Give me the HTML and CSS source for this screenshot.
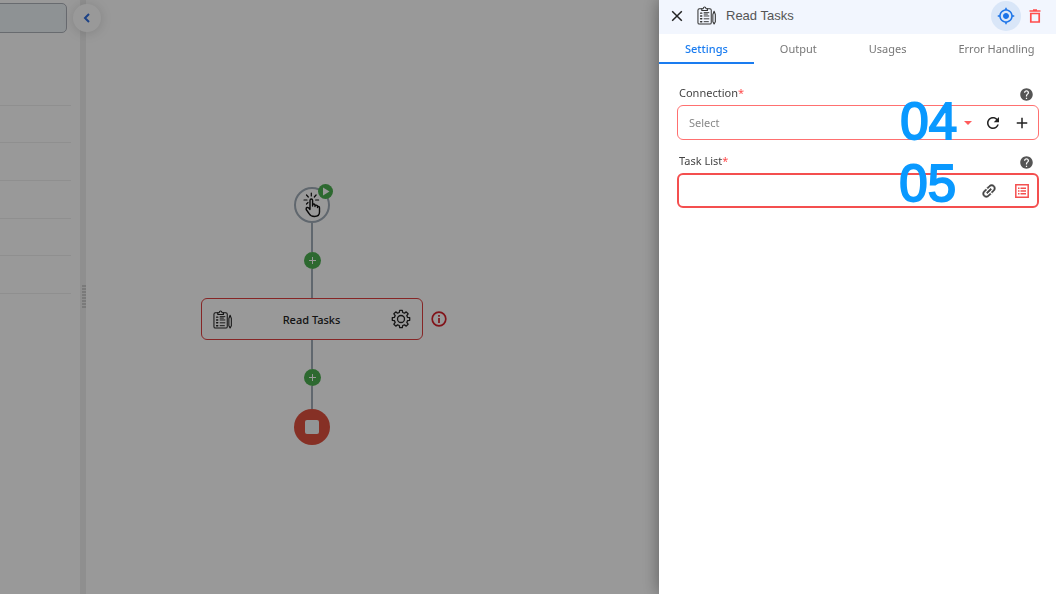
FILE: index.html
```html
<!DOCTYPE html>
<html lang="en">
<head>
    <meta charset="UTF-8">
    <meta name="viewport" content="width=device-width, initial-scale=1.0">
    <title>Read Tasks</title>
    <link rel="stylesheet" href="styles.css">
</head>
<body>

<!-- shared icons -->
<svg class="sprite" aria-hidden="true">
    <symbol id="tasks" viewBox="0 0 20 20">
        <g fill="none" stroke="currentColor" stroke-width="1.1" stroke-linejoin="round" stroke-linecap="round">
            <path d="M5 3H2.5Q1 3 1 4.500V17.500Q1 19 2.500 19H13.500Q15 19 15 17.500V4.500Q15 3 13.500 3H11"/>
            <path d="M5 4.800V2.800H6.500Q6.800 1 8 1T9.500 2.800H11V4.800Z"/>
            <path d="M3.800 7.500H5M3.800 10.500H5M3.800 13.500H5M3.800 16.500H5" stroke-width="1.500"/>
            <path d="M7.500 7H12.500M7.500 8.500H11M7.500 10.500H12.500M7.500 13.500H12.500M7.500 16.500H12" stroke-width="1"/>
            <path d="M16.700 9L18 5.500L19.300 9V16.500L18 19L16.700 16.500Z"/>
        </g>
    </symbol>
    <symbol id="help" viewBox="0 0 24 24">
        <path fill="currentColor" d="M12 2C6.480 2 2 6.480 2 12s4.480 10 10 10 10-4.480 10-10S17.520 2 12 2zm1 17h-2v-2h2v2zm2.070-7.750l-.9.920C13.450 12.900 13 13.500 13 15h-2v-.5c0-1.100.450-2.100 1.170-2.830l1.240-1.260c.370-.360.590-.860.590-1.410 0-1.100-.9-2-2-2s-2 .9-2 2H8c0-2.210 1.790-4 4-4s4 1.790 4 4c0 .880-.360 1.680-.930 2.250z"/>
    </symbol>
</svg>

<div class="app">
    <aside class="sidebar">
        <input class="search" type="text" aria-label="Search">
        <ul class="steps">
            <li></li>
            <li></li>
            <li></li>
            <li></li>
            <li></li>
            <li></li>
        </ul>
    </aside>
    <div class="divider">
        <button class="collapse" type="button" aria-label="Collapse">
            <svg width="8" height="10" viewBox="0 0 8 10"><path d="M6 1L2 5L6 9" fill="none" stroke="currentColor" stroke-width="2"/></svg>
        </button>
        <span class="grip"></span>
    </div>
    <main class="canvas">
        <div class="flow">
            <div class="node trigger">
                <svg width="24" height="26" viewBox="0 0 24 26" fill="none" stroke="currentColor" stroke-width="1.400" stroke-linecap="round" stroke-linejoin="round">
                    <path d="M10 17V8.500Q10 7 11.300 7T12.600 8.500V14M12.600 13Q13 11.700 14 12T15 13.500V14.500M15 13.700Q16 12.500 17.500 14V15.500M17.500 14.700Q19.500 14 19.500 16V20Q19.500 24.500 14.500 24.500Q10.500 24.500 9 21.500L6.200 17.500Q5.800 16 7 15.500T10 17.500"/>
                    <path d="M11.300 1V4M6.500 3L8.300 5M16.100 3L14.300 5M4 8H7M15.600 8H18.600M6.500 12L8 10.500" stroke-width="1.200"/>
                </svg>
                <button class="play" type="button" aria-label="Run">
                    <svg width="15" height="15" viewBox="0 0 15 15"><path d="M5 3.500V11.500L11.500 7.500Z" fill="currentColor"/></svg>
                </button>
            </div>
            <span class="line"></span>
            <button class="add" type="button" aria-label="Add step"><svg width="9" height="9" viewBox="0 0 9 9"><path d="M4.500 1V8M1 4.500H8" stroke="currentColor"/></svg></button>
            <span class="line"></span>
            <div class="card">
                <svg class="card-icon" width="19" height="19"><use href="#tasks"/></svg>
                <span class="card-name">Read Tasks</span>
                <button class="gear" type="button" aria-label="Step settings">
                    <svg width="20" height="20" viewBox="0 0 20 20" fill="none" stroke="currentColor" stroke-width="1.300" stroke-linejoin="round">
                        <path d="M8.300 3.500L8.700 1.300H11.300L11.700 3.500L13.400 4.200L15.200 2.900L17.100 4.800L15.800 6.600L16.500 8.300L18.700 8.700V11.300L16.500 11.700L15.800 13.400L17.100 15.200L15.200 17.100L13.400 15.800L11.700 16.500L11.300 18.700H8.700L8.300 16.500L6.600 15.800L4.800 17.100L2.900 15.200L4.200 13.400L3.500 11.700L1.300 11.300V8.700L3.500 8.300L4.200 6.600L2.900 4.800L4.800 2.900L6.600 4.200Z"/>
                        <circle cx="10" cy="10" r="3.500"/>
                    </svg>
                </button>
                <svg class="info" width="16" height="16" viewBox="0 0 16 16" fill="none" stroke="currentColor" stroke-width="1.700">
                    <circle cx="8" cy="8" r="6.800"/>
                    <path d="M8 7V12M8 4V5.700"/>
                </svg>
            </div>
            <span class="line"></span>
            <button class="add" type="button" aria-label="Add step"><svg width="9" height="9" viewBox="0 0 9 9"><path d="M4.500 1V8M1 4.500H8" stroke="currentColor"/></svg></button>
            <span class="line short"></span>
            <div class="node stop"><span></span></div>
        </div>
    </main>
</div>

<div class="overlay"></div>

<section class="drawer">
    <header class="drawer-header">
        <button class="icon-btn" type="button" aria-label="Close">
            <svg width="12" height="12" viewBox="0 0 12 12"><path d="M1.200 1.200L10.800 10.800M10.800 1.200L1.200 10.800" stroke="#222" stroke-width="1.500"/></svg>
        </button>
        <svg class="drawer-icon" width="19" height="19"><use href="#tasks"/></svg>
        <h1>Read Tasks</h1>
        <button class="locate" type="button" aria-label="Locate step">
            <svg width="18" height="18" viewBox="0 0 24 24"><path fill="currentColor" d="M12 8c-2.210 0-4 1.790-4 4s1.790 4 4 4 4-1.790 4-4-1.790-4-4-4zm8.940 3c-.460-4.170-3.770-7.480-7.940-7.940V1h-2v2.060C6.830 3.520 3.520 6.830 3.060 11H1v2h2.060c.460 4.170 3.770 7.480 7.940 7.940V23h2v-2.060c4.170-.460 7.480-3.770 7.940-7.940H23v-2h-2.060zM12 19c-3.870 0-7-3.130-7-7s3.130-7 7-7 7 3.130 7 7-3.130 7-7 7z"/></svg>
        </button>
        <button class="icon-btn delete" type="button" aria-label="Delete">
            <svg width="12" height="14" viewBox="0 0 12 14" fill="none" stroke="currentColor" stroke-width="1.700"><path d="M0.500 2H11.500M4 1H8M1.800 4.500V13H10.200V4.500Z"/></svg>
        </button>
    </header>
    <nav class="tabs">
        <a class="active" href="#settings">Settings</a>
        <a href="#output">Output</a>
        <a href="#usages">Usages</a>
        <a href="#errors">Error Handling</a>
    </nav>
    <form class="settings" id="settings">
        <div class="form-group">
            <div class="label-row">
                <label for="connection">Connection<span>*</span></label>
                <svg width="15" height="15"><use href="#help"/></svg>
            </div>
            <div class="field">
                <select id="connection">
                    <option>Select</option>
                </select>
                <svg class="caret" width="8" height="4" viewBox="0 0 8 4"><path d="M0 0H8L4 4Z" fill="currentColor"/></svg>
                <button type="button" aria-label="Refresh">
                    <svg width="18" height="18" viewBox="0 0 24 24"><path fill="currentColor" d="M17.650 6.350C16.200 4.900 14.210 4 12 4c-4.420 0-7.990 3.580-7.990 8s3.570 8 7.990 8c3.730 0 6.840-2.550 7.730-6h-2.080c-.820 2.330-3.040 4-5.650 4-3.310 0-6-2.690-6-6s2.690-6 6-6c1.660 0 3.140.690 4.220 1.780L13 11h7V4l-2.350 2.350z"/></svg>
                </button>
                <button type="button" aria-label="Add connection">
                    <svg width="18" height="18" viewBox="0 0 24 24"><path fill="currentColor" d="M19 13h-6v6h-2v-6H5v-2h6V5h2v6h6v2z"/></svg>
                </button>
                <span class="mark">04</span>
            </div>
        </div>
        <div class="form-group">
            <div class="label-row">
                <label for="taskList">Task List<span>*</span></label>
                <svg width="15" height="15"><use href="#help"/></svg>
            </div>
            <div class="field focused">
                <input type="text" id="taskList">
                <button class="link" type="button" aria-label="Link value">
                    <svg width="18" height="18" viewBox="0 0 24 24"><path transform="rotate(-45 12 12)" fill="currentColor" stroke="currentColor" stroke-width=".6" d="M3.900 12c0-1.710 1.390-3.100 3.100-3.100h4V7H7c-2.760 0-5 2.240-5 5s2.240 5 5 5h4v-1.900H7c-1.710 0-3.100-1.390-3.100-3.100zM8 13h8v-2H8v2zm9-6h-4v1.900h4c1.710 0 3.100 1.390 3.100 3.100s-1.390 3.100-3.100 3.100h-4V17h4c2.760 0 5-2.240 5-5s-2.240-5-5-5z"/></svg>
                </button>
                <button class="list" type="button" aria-label="Choose from list">
                    <svg width="18" height="18" viewBox="0 0 18 18" fill="none" stroke="currentColor" stroke-width="1.500"><path d="M2.800 2.800H15.200V15.200H2.800ZM5 6.200H6.500M7.500 6.200H13M5 9H6.500M7.500 9H13M5 11.800H6.500M7.500 11.800H13"/></svg>
                </button>
                <span class="mark">05</span>
            </div>
        </div>
    </form>
</section>

</body>
</html>
```

FILE: styles.css
```css
* {
    box-sizing: border-box;
}
body {
    margin: 0;
    font-family: "Noto Sans", sans-serif;
    font-size: 11px;
    background: #fff;
    overflow: hidden;
}
button {
    display: flex;
    align-items: center;
    justify-content: center;
    padding: 0;
    border: none;
    background: none;
    color: #222;
    cursor: pointer;
}
svg {
    display: block;
    flex: none;
}
.sprite {
    position: absolute;
    width: 0;
    height: 0;
}
.app {
    display: flex;
    height: 100vh;
}

/* left column */
.sidebar {
    width: 80px;
    padding-top: 3px;
    overflow: hidden;
}
.search {
    display: block;
    width: 80px;
    height: 30px;
    margin-left: -13px;
    border: 1px solid #aeb2ba;
    border-radius: 5px;
    background: #edf3f7;
}
.steps {
    display: grid;
    grid-auto-rows: 1fr;
    height: 226px;
    margin: 35px 9px 0 0;
    padding: 0;
    list-style: none;
}
.steps li {
    border-bottom: 1px solid #eee;
}
.divider {
    position: relative;
    display: flex;
    align-items: center;
    justify-content: flex-end;
    width: 6px;
    background: #efefef;
}
.collapse {
    position: absolute;
    top: 4px;
    left: -7px;
    width: 28px;
    height: 28px;
    border-radius: 50%;
    background: #fff;
    box-shadow: 0 1px 12px rgba(0, 0, 0, 0.15);
    color: #2f6fe0;
}
.grip {
    width: 4px;
    height: 24px;
    background: repeating-linear-gradient(#ccc 0 2px, #efefef 2px 3px);
}

/* flow */
.canvas {
    flex: 1;
    padding: 187px 0 0 115px;
}
.flow {
    display: flex;
    flex-direction: column;
    align-items: center;
    width: 222px;
}
.node {
    position: relative;
    display: flex;
    align-items: center;
    justify-content: center;
    width: 36px;
    height: 36px;
    border-radius: 50%;
}
.trigger {
    border: 2px solid #a0acb8;
    color: #111;
}
.play {
    position: absolute;
    top: -5px;
    right: -5px;
    width: 15px;
    height: 15px;
    border-radius: 50%;
    background: #4caf50;
    color: #fff;
}
.line {
    width: 2px;
    height: 29px;
    background: #a0acb8;
}
.short {
    height: 23px;
}
.add {
    width: 17px;
    height: 17px;
    border-radius: 50%;
    background: #4caf50;
    color: #fff;
}
.card {
    position: relative;
    display: flex;
    align-items: center;
    width: 100%;
    height: 42px;
    padding: 0 11px;
    border: 1px solid #e04040;
    border-radius: 6px;
    color: #222;
}
.card-name {
    flex: 1;
    text-align: center;
    font-weight: 500;
}
.info {
    position: absolute;
    left: 229px;
    color: #d8202a;
}
.stop {
    background: #e0503f;
}
.stop span {
    width: 14px;
    height: 14px;
    border-radius: 2px;
    background: #f4f8fa;
}
.overlay {
    position: fixed;
    inset: 0;
    background: rgba(0, 0, 0, 0.4);
}

/* settings drawer */
.drawer {
    position: fixed;
    top: 0;
    right: 0;
    bottom: 0;
    width: 397px;
    background: #fff;
    box-shadow: 0 0 16px rgba(0, 0, 0, 0.4);
}
.drawer-header {
    display: flex;
    align-items: center;
    height: 34px;
    padding: 0 14px 3px 11px;
    background: #f2f6fe;
}
.drawer-icon {
    margin-left: 13px;
    color: #333;
}
h1 {
    flex: 1;
    margin: 0 0 0 10px;
    font-family: "Liberation Sans", Arial, sans-serif;
    font-size: 13px;
    font-weight: normal;
    color: #555;
}
.icon-btn {
    width: 14px;
    height: 20px;
}
.locate {
    width: 30px;
    height: 30px;
    margin-right: 7px;
    border-radius: 50%;
    background: #d9e6f8;
    color: #1a73e8;
}
.delete {
    color: #ff4d4d;
}
.tabs {
    display: flex;
}
.tabs a {
    height: 30px;
    padding: 0 26px;
    line-height: 29px;
    white-space: nowrap;
    text-decoration: none;
    color: #777;
}
.tabs .active {
    border-bottom: 2px solid #1a7cf0;
    color: #1a7cf0;
    font-weight: 500;
}
.settings {
    padding: 20px 17px 0 18px;
}
.form-group {
    margin-bottom: 12px;
}
.label-row {
    display: flex;
    justify-content: space-between;
    height: 21px;
    padding: 0 5px 0 2px;
    line-height: 18px;
    color: #444;
}
.label-row span {
    color: #ff4d4d;
}
.label-row svg {
    margin-top: 3px;
    color: #555;
}
.field {
    position: relative;
    display: flex;
    align-items: center;
    height: 35px;
    padding-right: 7px;
    border: 1px solid #ff7070;
    border-radius: 6px;
}
.focused {
    border: 2px solid #f44f4f;
    padding-right: 6px;
}
.field select,
.field input {
    flex: 1;
    min-width: 0;
    height: 100%;
    padding: 0 11px;
    border: none;
    outline: none;
    appearance: none;
    background: none;
    font: inherit;
    color: #888;
}
.caret {
    color: #ff5c5c;
    margin-right: 12px;
}
.field button + button {
    margin-left: 11px;
}
.field .link {
    color: #444;
}
.field .link + .list {
    margin-left: 15px;
    color: #f44f4f;
}
/* step numbers over the fields */
.mark {
    position: absolute;
    top: -10px;
    right: 81px;
    font-family: "Liberation Sans", Arial, sans-serif;
    font-size: 51px;
    line-height: 52px;
    color: #0a99ff;
    -webkit-text-stroke: 2px #0a99ff;
    pointer-events: none;
}
.focused .mark {
    top: -17px;
}
```
